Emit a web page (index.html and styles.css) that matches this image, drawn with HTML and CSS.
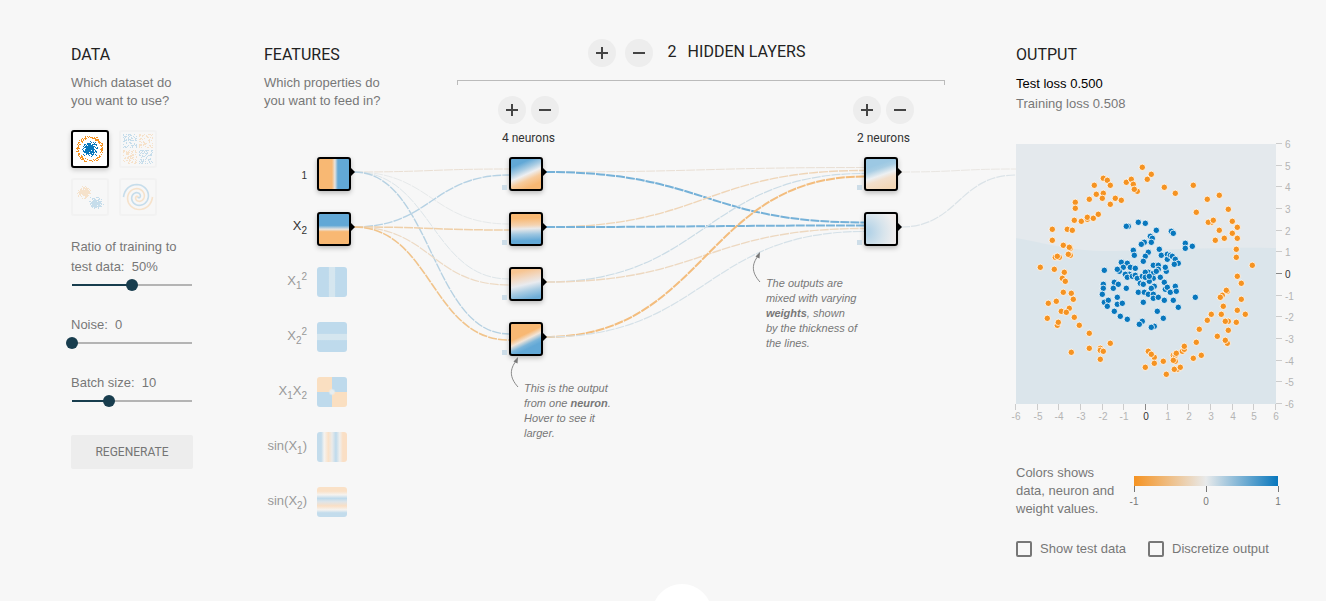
FILE: index.html
```html
<!DOCTYPE html>
<html lang="en">
<head>
<meta charset="utf-8">
<title>Neural network playground</title>
<link rel="stylesheet" href="styles.css">
</head>
<body>
<svg class="symbols" aria-hidden="true">
  <symbol id="plus" viewBox="0 0 12 12"><path d="M6 0v12M0 6h12" stroke="currentColor" stroke-width="2"/></symbol>
  <symbol id="minus" viewBox="0 0 12 12"><path d="M0 6h12" stroke="currentColor" stroke-width="2"/></symbol>
  <symbol id="callout-arrow" viewBox="0 0 10 32">
    <path d="M8 30C-1 20 0 12 6 4" fill="none" stroke="#888" stroke-width="1"/>
    <path d="M8 0 3.500 4.500 7.500 6.500z" fill="#777"/>
  </symbol>
</svg>
<main class="playground" id="playground">
  <svg class="links" id="links" aria-hidden="true"></svg>

  <section class="column data">
    <h2>DATA</h2>
    <p class="intro">Which dataset do you want to use?</p>
    <div class="datasets">
      <button class="dataset selected" aria-label="Circle"><svg id="thumb-circle" viewBox="0 0 34 34"></svg></button>
      <button class="dataset" aria-label="Exclusive or"><svg id="thumb-xor" viewBox="0 0 34 34"></svg></button>
      <button class="dataset" aria-label="Gaussian"><svg id="thumb-gauss" viewBox="0 0 34 34"></svg></button>
      <button class="dataset" aria-label="Spiral"><svg id="thumb-spiral" viewBox="0 0 34 34"></svg></button>
    </div>
    <div class="controls">
      <div class="control">
        <label for="ratio">Ratio of training to test data:&nbsp; 50%</label>
        <input id="ratio" type="range" min="10" max="90" value="50" style="--fill:50%">
      </div>
      <div class="control">
        <label for="noise">Noise:&nbsp; 0</label>
        <input id="noise" type="range" min="0" max="50" value="0" style="--fill:0%">
      </div>
      <div class="control">
        <label for="batch">Batch size:&nbsp; 10</label>
        <input id="batch" type="range" min="1" max="30" value="10" style="--fill:31%">
      </div>
    </div>
    <button class="regenerate">REGENERATE</button>
  </section>

  <section class="column features">
    <h2>FEATURES</h2>
    <p class="intro">Which properties do you want to feed in?</p>
    <ul class="feature-list">
      <li class="on"><span class="name"><sub>1</sub></span><button class="node source x1" aria-label="X1"></button></li>
      <li class="on"><span class="name">X<sub>2</sub></span><button class="node source x2" aria-label="X2"></button></li>
      <li><span class="name">X<sub>1</sub><sup>2</sup></span><button class="tile x1-squared" aria-label="X1 squared"></button></li>
      <li><span class="name">X<sub>2</sub><sup>2</sup></span><button class="tile x2-squared" aria-label="X2 squared"></button></li>
      <li><span class="name">X<sub>1</sub>X<sub>2</sub></span><button class="tile x1x2" aria-label="X1 times X2"></button></li>
      <li><span class="name">sin(X<sub>1</sub>)</span><button class="tile sin-x1" aria-label="sin X1"></button></li>
      <li><span class="name">sin(X<sub>2</sub>)</span><button class="tile sin-x2" aria-label="sin X2"></button></li>
    </ul>
  </section>

  <section class="column hidden-layers">
    <div class="layers-head">
      <button class="round" aria-label="Add layer"><svg><use href="#plus"/></svg></button>
      <button class="round" aria-label="Remove layer"><svg><use href="#minus"/></svg></button>
      <h2><span class="count">2</span>HIDDEN LAYERS</h2>
    </div>
    <div class="bracket"></div>
    <div class="layers">
      <div class="layer">
        <div class="layer-buttons">
          <button class="round" aria-label="Add neuron"><svg><use href="#plus"/></svg></button>
          <button class="round" aria-label="Remove neuron"><svg><use href="#minus"/></svg></button>
        </div>
        <p>4 neurons</p>
        <div class="neurons">
          <div class="node neuron first h1"></div>
          <div class="node neuron first h2"></div>
          <div class="node neuron first h3"></div>
          <div class="node neuron first h4"></div>
        </div>
      </div>
      <div class="layer">
        <div class="layer-buttons">
          <button class="round" aria-label="Add neuron"><svg><use href="#plus"/></svg></button>
          <button class="round" aria-label="Remove neuron"><svg><use href="#minus"/></svg></button>
        </div>
        <p>2 neurons</p>
        <div class="neurons">
          <div class="node neuron second o1"></div>
          <div class="node neuron second o2"></div>
        </div>
      </div>
    </div>
    <aside class="callout output-note">
      <svg><use href="#callout-arrow"/></svg>
      This is the output<br>from one <b>neuron</b>.<br>Hover to see it<br>larger.
    </aside>
    <aside class="callout weight-note">
      <svg><use href="#callout-arrow"/></svg>
      The outputs are<br>mixed with varying<br><b>weights</b>, shown<br>by the thickness of<br>the lines.
    </aside>
  </section>

  <section class="column output">
    <h2>OUTPUT</h2>
    <div class="loss">
      <p class="test">Test loss 0.500</p>
      <p>Training loss 0.508</p>
    </div>
    <svg class="plot" id="plot" viewBox="0 0 280 280" role="img" aria-label="Network output"></svg>
    <div class="legend">
      <p>Colors shows data, neuron and weight values.</p>
      <div class="scale">
        <div class="ramp"></div>
        <div class="ticks"><span>-1</span><span>0</span><span>1</span></div>
      </div>
    </div>
    <div class="options">
      <label><input type="checkbox">Show test data</label>
      <label><input type="checkbox">Discretize output</label>
    </div>
  </section>

  <button class="more" aria-label="Read more"></button>
</main>
<script src="app.js"></script>
</body>
</html>
```
FILE: styles.css
```css
* { box-sizing: border-box; }

body {
  margin: 0;
  background: #f7f7f7;
  color: #777;
  font: 13px/18px "Liberation Sans", Arial, sans-serif;
}

h2, p, ul { margin: 0; padding: 0; }
button { border: 0; padding: 0; font: inherit; cursor: pointer; }
.symbols { display: none; }

h2 {
  color: #222;
  font: 400 16px/20px Roboto, sans-serif;
}

.playground {
  position: relative;
  display: grid;
  grid-template-columns: 122px 122px minmax(360px, 1fr) 280px;
  column-gap: 71px;
  align-items: start;
  min-height: 100vh;
  padding: 45px 30px 40px 71px;
  overflow: hidden;
}

.column { position: relative; }
.intro { margin-top: 9px; }

.links {
  position: absolute;
  inset: 0;
  width: 100%;
  height: 100%;
  fill: none;
  pointer-events: none;
}

/* Data */
.datasets {
  display: grid;
  grid-template-columns: 38px 38px;
  gap: 10px;
  margin-top: 20px;
}
.dataset {
  height: 38px;
  border: 2px solid #f2f2f2;
  border-radius: 3px;
  background: #f7f7f7;
}
.dataset svg { display: block; width: 34px; height: 34px; opacity: 0.2; }
.dataset.selected {
  border-color: #000;
  background: #fff;
  box-shadow: 0 2px 5px rgba(0, 0, 0, 0.2);
}
.dataset.selected svg { opacity: 1; }

.controls { display: grid; gap: 20px; margin-top: 21px; }
.control label { display: block; line-height: 20px; }
.control input {
  appearance: none;
  display: block;
  width: calc(100% + 10px);
  height: 18px;
  margin: -1px -5px 1px;
  background:
    linear-gradient(90deg, #183d4e var(--fill), #b4b4b4 var(--fill)) no-repeat center / calc(100% - 12px) 2px;
}
.control input::-webkit-slider-thumb {
  appearance: none;
  width: 12px;
  height: 12px;
  border-radius: 50%;
  background: #183d4e;
}

.regenerate {
  width: 100%;
  height: 34px;
  margin-top: 24px;
  border-radius: 2px;
  background: #ededed;
  color: #757575;
  font: 400 12px/34px Roboto, sans-serif;
}

/* Nodes */
.node {
  position: relative;
  display: block;
  width: 34px;
  height: 34px;
  border: 2px solid #000;
  border-radius: 3px;
  background-origin: border-box;
  box-shadow: 0 2px 5px rgba(0, 0, 0, 0.25);
}
.node::after {
  content: "";
  position: absolute;
  left: 31px;
  top: 8px;
  width: 5px;
  height: 10px;
  background: #000;
  clip-path: polygon(0 0, 100% 50%, 0 100%);
}
.neuron::before {
  content: "";
  position: absolute;
  left: -9px;
  bottom: -1px;
  width: 5px;
  height: 5px;
  background: #cddde8;
}

.feature-list {
  display: grid;
  grid-auto-rows: 55px;
  margin-top: 47px;
  list-style: none;
}
.feature-list li {
  display: grid;
  grid-template-columns: 43px auto;
  column-gap: 10px;
  align-items: start;
  justify-content: start;
  color: #999;
}
.feature-list .on { color: #333; }
.name { line-height: 28px; text-align: right; white-space: nowrap; }
.name sub, .name sup { font-size: 10px; line-height: 0; }
.name sub { vertical-align: -4px; }
.name sup { vertical-align: 5px; }
.tile { width: 30px; height: 30px; border-radius: 3px; }

.x1 { background: linear-gradient(90deg, #f8b873 43%, #e8e4df 53%, #62a8d6 63%); }
.x2 { background: linear-gradient(180deg, #62a8d6 38%, #e8e4df 51%, #f8b873 59%); }
.x1-squared { background: linear-gradient(90deg, #bedaec 38%, #d5e6ef 41%, #d5e6ef 59%, #bedaec 62%); }
.x2-squared { background: linear-gradient(180deg, #bedaec 38%, #d5e6ef 41%, #d5e6ef 59%, #bedaec 62%); }
.x1x2 {
  background:
    radial-gradient(circle, #e8edee 8%, transparent 18%),
    conic-gradient(#bedaec 25%, #fadfc1 0 50%, #bedaec 0 75%, #fadfc1 0);
}
.sin-x1 { background: linear-gradient(90deg, #c3dcec 14%, #f5f3f0 24%, #fae1c7 38%, #ebebea 50%, #bedaec 63%, #f0efed 76%, #fadfc5 86%); }
.sin-x2 { background: linear-gradient(180deg, #fae1c7 14%, #f5f3f0 26%, #bedaec 38%, #dee5e9 49%, #fadfc5 63%, #f5f3f0 76%, #c3dcec 86%); }
.h1 { background: linear-gradient(156deg, #62a8d6 20%, #a9cce3 37%, #eeeff1 51%, #f7cb9c 66%, #f8b873 84%); }
.h2 { background: linear-gradient(178deg, #f8b873 15%, #f4d3b1 38%, #eae9e9 49%, #9fc7e1 67%, #62a8d6 88%); }
.h3 { background: linear-gradient(167deg, #f7c592 12%, #f1dac6 33%, #e9ebef 51%, #a9cce3 70%, #6faed8 92%); }
.h4 { background: linear-gradient(154deg, #f8b873 38%, #f2e5d8 51%, #7bb5da 64%, #62a8d6 74%); }
.o1 { background: linear-gradient(161deg, #9cc8e3 24%, #a9cee4 35%, #edf0f2 53%, #f2dfcc 65%, #f3d7b6 90%); }
.o2 { background: radial-gradient(circle at 0 60%, #b4d3e7 10%, #d7e4ec 50%, #ededee 80%, #f3e6e0 110%); }

/* Hidden layers */
.round {
  display: grid;
  place-items: center;
  width: 28px;
  height: 28px;
  border-radius: 50%;
  background: #ededed;
  color: #444;
}
.round svg { width: 12px; height: 12px; }

.layers-head {
  display: flex;
  justify-content: center;
  gap: 9px;
  margin-top: -6px;
  padding-right: 9px;
}
.layers-head h2 { margin: 3px 0 0 6px; }
.count { margin-right: 11px; }
.bracket {
  height: 5px;
  margin-top: 13px;
  border: 1px solid #bbb;
  border-bottom: 0;
}
.layers {
  display: flex;
  justify-content: space-between;
  margin-top: 11px;
  padding: 0 31px 0 41px;
}
.layer { width: 61px; }
.layer-buttons { display: flex; justify-content: space-between; }
.layer p {
  margin-top: 4px;
  color: #333;
  font: 12px/20px Roboto, sans-serif;
  text-align: center;
}
.neurons { display: grid; gap: 21px; margin: 9px 0 0 11px; }

.callout {
  position: absolute;
  padding: 24px 0 0 14px;
  font-size: 11px;
  font-style: italic;
  line-height: 15px;
  white-space: nowrap;
}
.callout svg { position: absolute; left: 0; top: 0; width: 10px; height: 32px; }
.output-note { left: 53px; top: 312px; }
.weight-note { right: 88px; top: 207px; }

/* Output */
.loss { margin-top: 9px; line-height: 20px; }
.loss .test { color: #000; }
.plot {
  display: block;
  width: 280px;
  height: 280px;
  margin-top: 30px;
  overflow: visible;
  font-size: 10px;
}
.plot .axis { stroke: #ccc; }
.plot .axis.zero { stroke: #888; }
.plot text { fill: #b4b4b4; }
.plot text.zero { fill: #333; }
.plot .middle { text-anchor: middle; }

.legend { display: flex; justify-content: space-between; margin-top: 40px; }
.legend p { width: 110px; }
.scale { width: 144px; margin: 12px 18px 0 0; }
.ramp { height: 10px; background: linear-gradient(90deg, #f59322, #e8eaeb 50%, #0877bd); }
.ticks { display: flex; justify-content: space-between; margin: 0 -10px; font-size: 10px; }
.ticks span { width: 20px; text-align: center; line-height: 20px; }
.ticks span::before {
  content: "";
  display: block;
  width: 1px;
  height: 6px;
  margin: 0 auto;
  background: #777;
}

.options { display: flex; gap: 22px; margin-top: 22px; }
.options label { display: flex; align-items: center; gap: 8px; white-space: nowrap; }
.options input {
  appearance: none;
  width: 16px;
  height: 16px;
  margin: 0;
  border: 2px solid #777;
  border-radius: 2px;
}
.options input:checked { background: #183d4e; }

.more {
  position: absolute;
  left: calc(50% - 11px);
  bottom: -43px;
  width: 60px;
  height: 60px;
  border-radius: 50%;
  background: #fff;
}
```
FILE: app.js
```js
const SVG = "http://www.w3.org/2000/svg";
const ORANGE = "#f59322";
const BLUE = "#0877bd";

function add(parent, tag, attrs, text) {
  const el = document.createElementNS(SVG, tag);
  for (const key in attrs) el.setAttribute(key, attrs[key]);
  if (text !== undefined) el.textContent = text;
  parent.appendChild(el);
  return el;
}

/* Links between layers: [from, to, colour, width] */
const firstLinks = [
  [0, 0, "#eadfd3", 1], [0, 1, "#e6e9ea", 1], [0, 2, "#dde5e9", 1], [0, 3, "#b6d1e2", 1.4],
  [1, 0, "#b6d2e4", 1.4], [1, 1, "#efcfa8", 1.5], [1, 2, "#eddac4", 1.2], [1, 3, "#f1c48c", 1.6]
];
const secondLinks = [
  [0, 0, "#e9dfd4", 1], [0, 1, "#75b1d8", 2], [1, 0, "#efd5b7", 1.4], [1, 1, "#78b3d9", 2],
  [2, 0, "#cbdce6", 1.2], [2, 1, "#edd8c0", 1.4], [3, 0, "#f3bd7e", 2], [3, 1, "#d5e1e8", 1.2]
];
const outLinks = [[0, 0, "#e9e6e2", 1], [1, 0, "#dbe3e8", 1.2]];

function drawLinks() {
  const svg = document.getElementById("links");
  const origin = document.getElementById("playground").getBoundingClientRect();
  svg.replaceChildren();
  const place = selector => [...document.querySelectorAll(selector)].map(el => {
    const box = el.getBoundingClientRect();
    return { left: box.left - origin.left, right: box.right - origin.left, y: box.top - origin.top + 15 };
  });
  const sources = place(".source"), first = place(".first"), second = place(".second");
  const plot = place("#plot")[0];
  const target = [{ left: plot.left, y: second[0].y }];
  const connect = (from, to, links) => links.forEach(([a, b, stroke, width]) => {
    const x1 = from[a].right + 3, y1 = from[a].y, x2 = to[b].left;
    const y2 = to[b].y + (a - (from.length - 1) / 2) / from.length * 12;
    const mid = (x1 + x2) / 2;
    add(svg, "path", {
      d: `M${x1} ${y1}C${mid} ${y1} ${mid} ${y2} ${x2} ${y2}`,
      stroke, "stroke-width": width, "stroke-dasharray": "9 1"
    });
  });
  connect(sources, first, firstLinks);
  connect(first, second, secondLinks);
  connect(second, target, outLinks);
}

/* Output plot */
const orangePoints = [
  126,23,135,30,131,35,87,34,91,36,94,41,78,41,110,38,115,35,117,40,121,47,118,45,80,50,87,49,86,54,
  73,55,99,54,105,56,94,60,59,58,59,64,82,70,58,76,65,77,71,75,71,73,77,74,36,85,51,85,56,86,36,96,
  47,101,54,104,53,103,39,113,43,113,41,112,54,111,52,110,24,123,38,125,48,128,46,134,49,137,
  148,43,159,49,177,41,191,55,203,51,180,68,212,65,195,78,192,78,197,76,216,77,221,83,203,86,216,89,
  221,94,199,96,208,94,220,105,220,113,236,121,221,132,225,139,
  47,148,55,149,57,155,40,157,32,159,31,174,45,167,53,164,50,168,58,173,63,181,41,181,42,178,73,189,
  94,199,73,204,84,204,84,206,87,207,84,215,55,208,
  211,147,210,146,206,151,204,153,225,155,207,162,221,166,229,170,195,170,205,170,191,176,212,177,
  209,177,220,178,183,185,212,186,201,192,180,198,211,199,209,196,166,207,168,205,168,202,132,207,
  138,213,135,210,138,219,129,223,157,211,159,211,160,209,147,217,159,217,157,216,150,230,161,225,
  158,225,164,223,177,214,185,211
];
const bluePoints = [
  112,82,110,82,122,78,129,79,140,86,134,92,136,94,135,98,128,98,125,100,117,106,118,111,143,105,
  132,108,129,112,127,117,145,111,105,118,111,119,107,123,103,127,101,125,114,123,119,124,88,126,
  113,130,109,130,111,133,116,132,119,131,121,134,126,132,132,128,129,128,137,121,142,121,142,125,
  137,129,137,134,133,137,124,139,127,140,129,133,87,140,87,144,98,138,102,140,97,144,110,144,
  138,142,135,144,86,150,101,153,88,158,92,156,91,162,101,160,106,159,98,167,104,172,111,175,
  126,177,123,180,138,182,135,183,141,167,127,158,122,148,128,148,132,150,137,150,137,154,142,153,
  155,87,157,89,169,99,169,104,176,102,151,110,151,115,154,111,156,112,159,115,162,119,158,120,
  150,127,149,123,144,133,148,138,149,145,151,143,159,142,154,148,160,147,148,156,157,156,162,163,
  179,153,147,174,140,127,133,132
];

function drawPlot() {
  const svg = document.getElementById("plot");
  add(svg, "rect", { width: 260, height: 260, fill: "#dbe5eb" });
  add(svg, "path", { d: "M0 0H260V104C200 103 150 106 100 107 55 108 30 99 0 94Z", fill: "#e4e9ed" });
  const dots = (points, fill) => {
    for (let i = 0; i < points.length; i += 2) {
      add(svg, "circle", { cx: points[i] + 0.3, cy: points[i + 1] + 0.3, r: 3.2, fill, stroke: "#fff", "stroke-opacity": 0.8 });
    }
  };
  dots(orangePoints, ORANGE);
  dots(bluePoints, BLUE);
  for (let v = -6; v <= 6; v++) {
    const at = Math.round((v + 6) * 260 / 12) + 0.5 - 1;
    const zero = v === 0 ? " zero" : "";
    add(svg, "path", { d: `M${at} 260v6`, class: "axis" + zero });
    add(svg, "path", { d: `M260 ${259 - at}h6`, class: "axis" + zero });
    add(svg, "text", { x: at + 0.5, y: 276, class: "middle" + zero }, v);
    add(svg, "text", { x: 269, y: Math.round(263 - at), class: zero }, v);
  }
}

/* Dataset thumbnails */
let seed = 11;
function random() {
  seed = (seed * 16807) % 2147483647;
  return seed / 2147483647;
}
function gauss() { return random() + random() + random() - 1.5; }
function speck(svg, x, y, fill) {
  add(svg, "rect", { x: Math.round(x), y: Math.round(y), width: 1, height: 1, fill, "shape-rendering": "crispEdges" });
}
function drawThumbs() {
  const get = name => document.getElementById("thumb-" + name);
  const circle = get("circle"), xor = get("xor"), blobs = get("gauss"), spiral = get("spiral");
  for (let i = 0; i < 170; i++) {
    const angle = random() * 2 * Math.PI, radius = 10.5 + random() * 3;
    speck(circle, 16.5 + radius * Math.cos(angle), 16.5 + radius * Math.sin(angle), ORANGE);
  }
  for (let i = 0; i < 280; i++) {
    speck(circle, 16.5 + gauss() * 6, 17 + gauss() * 6, BLUE);
  }
  for (let i = 0; i < 420; i++) {
    const x = (random() - 0.5) * 30, y = (random() - 0.5) * 30;
    if (Math.abs(x) > 1 && Math.abs(y) > 1) speck(xor, 16.5 + x, 16.5 + y, x * y > 0 ? BLUE : ORANGE);
  }
  for (let i = 0; i < 220; i++) {
    speck(blobs, 11 + gauss() * 5, 11.5 + gauss() * 5, ORANGE);
    speck(blobs, 22.5 + gauss() * 5, 23 + gauss() * 5, BLUE);
  }
  [[Math.PI, BLUE], [0, ORANGE]].forEach(([start, stroke]) => {
    let d = "";
    for (let i = 0; i <= 60; i++) {
      const r = 14.5 * i / 60, a = start + 3.5 * Math.PI / 60 * (60 - i);
      d += (i ? "L" : "M") + (17 + r * Math.cos(a)).toFixed(2) + " " + (17 + r * Math.sin(a)).toFixed(2);
    }
    add(spiral, "path", { d, fill: "none", stroke, "stroke-width": 1.6 });
  });
}

drawThumbs();
drawPlot();
drawLinks();
window.addEventListener("resize", drawLinks);
```
